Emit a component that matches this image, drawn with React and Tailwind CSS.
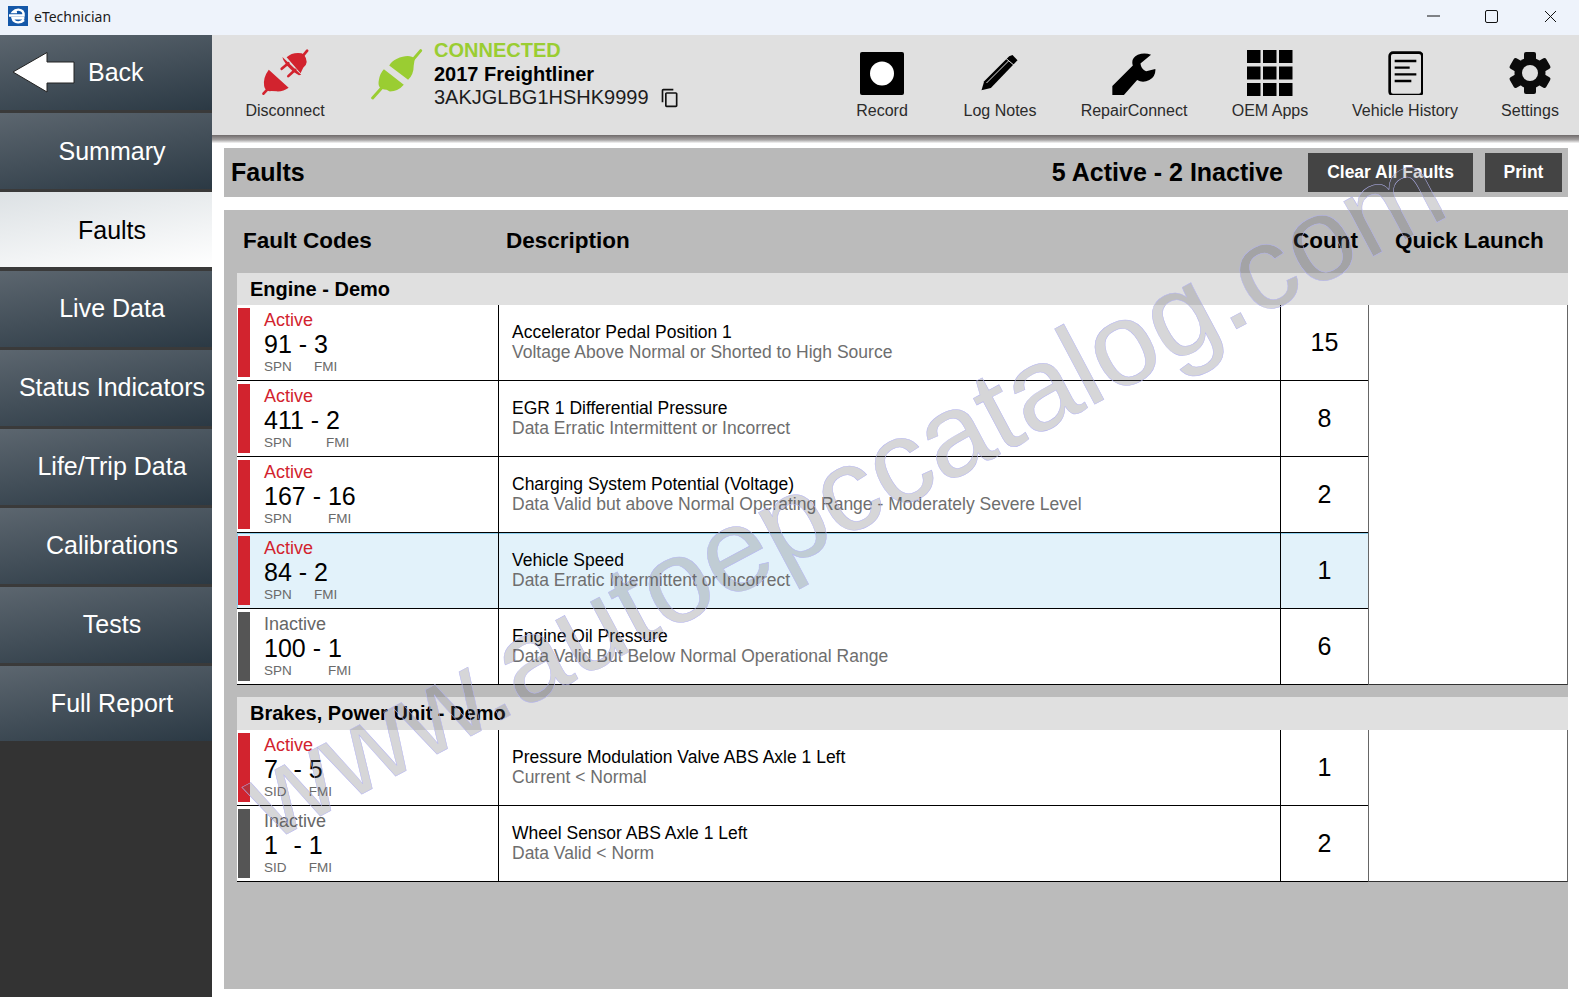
import React from "react";
import { MdOutlineContentCopy } from "react-icons/md";

const NAV = ["Summary", "Faults", "Live Data", "Status Indicators", "Life/Trip Data", "Calibrations", "Tests", "Full Report"];

const ENGINE = [
  { active: true, a: "91", b: "3", l: "SPN", title: "Accelerator Pedal Position 1", sub: "Voltage Above Normal or Shorted to High Source", count: 15 },
  { active: true, a: "411", b: "2", l: "SPN", title: "EGR 1 Differential Pressure", sub: "Data Erratic Intermittent or Incorrect", count: 8 },
  { active: true, a: "167", b: "16", l: "SPN", title: "Charging System Potential (Voltage)", sub: "Data Valid but above Normal Operating Range - Moderately Severe Level", count: 2 },
  { active: true, a: "84", b: "2", l: "SPN", title: "Vehicle Speed", sub: "Data Erratic Intermittent or Incorrect", count: 1, selected: true },
  { active: false, a: "100", b: "1", l: "SPN", title: "Engine Oil Pressure", sub: "Data Valid But Below Normal Operational Range", count: 6 },
];
const BRAKES = [
  { active: true, a: "7", b: "5", l: "SID", title: "Pressure Modulation Valve ABS Axle 1 Left", sub: "Current < Normal", count: 1 },
  { active: false, a: "1", b: "1", l: "SID", title: "Wheel Sensor ABS Axle 1 Left", sub: "Data Valid < Norm", count: 2 },
];

function FaultRow({ r }) {
  return (
    <div className={`flex h-[76px] border-b border-black ${r.selected ? "bg-[#e2f2fa] shadow-[inset_1px_1px_0_#8fd0ee]" : "bg-white"}`}>
      <div className="flex w-[261px] shrink-0">
        <div className={`w-[12px] h-[69px] mt-[3px] ml-[1px] ${r.active ? "bg-[#d2232e]" : "bg-[#555555]"}`} />
        <div className="ml-[14px] pt-[5px]">
          <div className={`text-[18px] leading-[20px] ${r.active ? "text-[#d2232e]" : "text-[#666666]"}`}>{r.active ? "Active" : "Inactive"}</div>
          <div className="grid grid-cols-[auto_auto_auto] w-fit text-[25px] leading-[28px] text-black">
            <span>{r.a}</span>
            <span className="whitespace-pre"> - </span>
            <span>{r.b}</span>
            <span className="text-[13.5px] leading-[18px] text-[#6a6a6a]">{r.l}</span>
            <span />
            <span className="text-[13.5px] leading-[18px] text-[#6a6a6a]">FMI</span>
          </div>
        </div>
      </div>
      <div className="flex-1 border-l border-black pl-[13px] pb-[1px] flex flex-col justify-center">
        <div className="text-[17.5px] leading-[20px] text-black">{r.title}</div>
        <div className="text-[17.5px] leading-[20px] text-[#6e6e6e]">{r.sub}</div>
      </div>
      <div className="w-[88px] border-l border-black flex items-center justify-center text-[25px] text-black">{r.count}</div>
    </div>
  );
}

function Group({ title, rows, tall }) {
  return (
    <div>
      <div className={`${tall ? "h-[33px] pb-[1px]" : "h-[32px]"} bg-[#e0e0e0] pl-[13px] flex items-center text-[20px] font-bold text-black`}>{title}</div>
      <div className="grid grid-cols-[1131px_200px]">
        <div>
          {rows.map((r) => (
            <FaultRow key={r.title} r={r} />
          ))}
        </div>
        <div className="bg-white border-x border-[#666666] border-b border-b-[#333333]" />
      </div>
    </div>
  );
}

function ToolLabel({ children }) {
  return <div className="text-[16px] leading-[20px] text-[#2b2b2b] whitespace-nowrap">{children}</div>;
}

function RedPlug() {
  return (
    <svg width="50" height="48" viewBox="90 40 150 145" fill="#d2232e" stroke="none">
      <path d="M116 106 L176 160 Q160 172 140 171 L124 170 Q105 173 102 155 Q98 130 116 106Z" />
      <path d="M112 165 L100 178" stroke="#d2232e" strokeWidth="8" strokeLinecap="round" />
      <path d="M157 67 L214 121 L207 122 L190 112 L170 92 L160 76Z" />
      <path d="M170 68 Q187 52 215 56 L222 60 Q240 85 220 100 L212 116 Z" />
      <path d="M222 60 L232 48" stroke="#d2232e" strokeWidth="8" strokeLinecap="round" />
      <path d="M175 86 L155 103 M196 106 L175 125" stroke="#d2232e" strokeWidth="8" strokeLinecap="round" />
    </svg>
  );
}

function GreenPlug() {
  return (
    <svg width="53" height="52" viewBox="420 40 160 155" fill="#9acd32">
      <path d="M478 92 L535 135 Q552 120 552 92 L555 72 Q540 55 500 72 Q485 78 478 92Z" />
      <path d="M545 80 L573 47" stroke="#9acd32" strokeWidth="9" strokeLinecap="round" />
      <path d="M462 103 L522 150 Q505 170 480 170 L470 165 Q440 165 447 135 Q450 115 462 103Z" />
      <path d="M455 160 L428 190" stroke="#9acd32" strokeWidth="9" strokeLinecap="round" />
    </svg>
  );
}

function Gear() {
  return (
    <svg width="44" height="44" viewBox="-22 -22 44 44" fill="#0b0b0b">
      <circle r="15.5" />
      {[0, 60, 120, 180, 240, 300].map((d) => (
        <rect key={d} x="-6" y="-21" width="12" height="10" rx="2" transform={`rotate(${d})`} />
      ))}
      <circle r="8" fill="#e0e0e0" />
    </svg>
  );
}

export default function App() {
  return (
    <div className="relative w-[1579px] h-[997px] overflow-hidden flex flex-col bg-white font-['Liberation_Sans',Arial,sans-serif]">
      {/* Title bar */}
      <div className="h-[35px] shrink-0 bg-[#eef3fb] flex items-center pl-[8px] pb-[3px]">
        <svg width="20" height="20" viewBox="0 0 20 20" className="shrink-0">
          <rect width="20" height="20" fill="#1457a8" />
          <path d="M1 9.5 H15.6 Q16 4 10.5 3.6 Q7 3.5 5 6 H9 M16 14 Q13 16.6 10 16.4 Q5.5 16 4.6 12.2 H16.4" fill="none" stroke="#fff" strokeWidth="2.4" />
        </svg>
        <span className="ml-[6px] text-[14px] text-[#1a1a1a] font-['Noto_Sans',sans-serif]">eTechnician</span>
        <div className="ml-auto flex items-center">
          <div className="w-[58px] flex justify-center">
            <svg width="13" height="12" viewBox="0 0 13 12"><path d="M0 6H13" stroke="#111" strokeWidth="1" /></svg>
          </div>
          <div className="w-[58px] flex justify-center">
            <svg width="13" height="13" viewBox="0 0 13 13"><rect x="0.5" y="0.5" width="12" height="12" rx="1.5" fill="none" stroke="#111" /></svg>
          </div>
          <div className="w-[60px] mr-[-1px] flex justify-center">
            <svg width="13" height="13" viewBox="0 0 13 13"><path d="M1 1L12 12M12 1L1 12" stroke="#111" strokeWidth="1" /></svg>
          </div>
        </div>
      </div>

      <div className="flex flex-1 min-h-0">
        {/* Sidebar */}
        <aside className="w-[212px] shrink-0 bg-[#333333] flex flex-col">
          <div className="h-[78px] border-b-[3px] border-[#3a3a3a] bg-[linear-gradient(170deg,#5c666f,#2b3944)] flex items-center pl-[12px] text-[25px] text-white">
            <svg width="64" height="43" viewBox="0 0 64 43" className="shrink-0">
              <path d="M1 21L35 1.5V11H62V32H35V41Z" fill="#fff" stroke="#222" strokeWidth="1" />
            </svg>
            <span className="ml-[12px]">Back</span>
          </div>
          {NAV.map((n) =>
            n === "Faults" ? (
              <div key={n} className="h-[79px] border-b-[4px] border-[#3a3a3a] bg-[linear-gradient(170deg,#dce1e4,#ffffff)] flex items-center justify-center pl-[12px] pt-[3px] text-[25px] text-black">
                {n}
              </div>
            ) : (
              <div key={n} className={`${n === "Full Report" ? "h-[75px]" : "h-[79px] border-b-[3px] border-[#3a3a3a]"} ${n === "Summary" ? "pt-[2px]" : ""} bg-[linear-gradient(170deg,#5c666f,#2b3944)] flex items-center justify-center pl-[12px] text-[25px] text-white whitespace-nowrap`}>
                {n}
              </div>
            )
          )}
        </aside>

        <main className="flex-1 min-w-0 flex flex-col">
          {/* Toolbar */}
          <div className="h-[100px] shrink-0 bg-[#e0e0e0] flex">
            <div className="w-[146px] shrink-0 flex flex-col items-center pt-[13px] ">
              <RedPlug />
              <div className="mt-[5px]"><ToolLabel>Disconnect</ToolLabel></div>
            </div>
            <div className="ml-[12px] pt-[13px]">
              <GreenPlug />
            </div>
            <div className="ml-[11px] pt-[4px]">
              <div className="text-[20px] leading-[22px] font-bold text-[#9acd32]">CONNECTED</div>
              <div className="mt-[1px] text-[20px] leading-[25px] font-bold text-black">2017 Freightliner</div>
              <div className="-mt-[2px] flex items-center text-[20px] leading-[24px] text-[#1c1c1c]">
                3AKJGLBG1HSHK9999
                <MdOutlineContentCopy className="ml-[11px] mt-[2px] text-[#111]" size={20} />
              </div>
            </div>
            <div className="ml-auto flex">
              <div className="w-[100px] flex flex-col items-center pt-[17px]">
                <svg width="44" height="43" viewBox="0 0 44 43"><rect width="44" height="43" rx="2" fill="#000" /><circle cx="22" cy="21.5" r="12" fill="#fff" /></svg>
                <div className="mt-[6px]"><ToolLabel>Record</ToolLabel></div>
              </div>
              <div className="ml-[18px] w-[100px] flex flex-col items-center pt-[18px]">
                <svg width="42" height="40" viewBox="390 40 125 120">
                  <path d="M397 152 L405 125 L480 50 L490 46 L505 62 L425 145 Z" fill="#000" />
                  <path d="M412 130 L478 64 M470 56 L496 78" stroke="#e0e0e0" strokeWidth="3" fill="none" />
                </svg>
                <div className="mt-[8px]"><ToolLabel>Log Notes</ToolLabel></div>
              </div>
              <div className="ml-[10px] w-[148px] flex flex-col items-center pt-[18px]">
                <svg width="47" height="43" viewBox="780 40 140 130">
                  <path d="M783 140 L845 78 Q838 55 860 45 Q880 38 900 45 L868 72 Q870 90 885 95 L913 88 Q915 110 895 122 Q875 132 858 122 L818 167 L783 167 Z" fill="#000" />
                </svg>
                <div className="mt-[5px]"><ToolLabel>RepairConnect</ToolLabel></div>
              </div>
              <div className="ml-[7px] w-[110px] flex flex-col items-center pt-[15px]">
                <svg width="46" height="46" viewBox="0 0 46 46" fill="#000">
                  <rect x="0" y="0" width="13.5" height="13" /><rect x="16" y="0" width="13.5" height="13" /><rect x="32" y="0" width="13.5" height="13" />
                  <rect x="0" y="16.5" width="13.5" height="13" /><rect x="16" y="16.5" width="13.5" height="13" /><rect x="32" y="16.5" width="13.5" height="13" />
                  <rect x="0" y="33" width="13.5" height="13" /><rect x="16" y="33" width="13.5" height="13" /><rect x="32" y="33" width="13.5" height="13" />
                </svg>
                <div className="mt-[5px]"><ToolLabel>OEM Apps</ToolLabel></div>
              </div>
              <div className="ml-[15px] w-[130px] flex flex-col items-center pt-[16px]">
                <svg width="35" height="44" viewBox="470 30 105 132">
                  <rect x="475" y="35" width="98" height="127" rx="10" fill="none" stroke="#000" strokeWidth="8" />
                  <path d="M490 60H555M490 80H535M490 100H555M490 120H540" stroke="#000" strokeWidth="7" />
                </svg>
                <div className="mt-[6px]"><ToolLabel>Vehicle History</ToolLabel></div>
              </div>
              <div className="ml-[20px] mr-[9px] w-[80px] flex flex-col items-center pt-[16px]">
                <Gear />
                <div className="mt-[6px]"><ToolLabel>Settings</ToolLabel></div>
              </div>
            </div>
          </div>
          <div className="h-[8px] shrink-0 bg-[linear-gradient(#6f6a6a,#a5a2a2_60%,#f6f6f6)]" />

          <div className="flex-1 min-h-0 flex flex-col pl-[12px] pr-[11px] pt-[5px] pb-[8px]">
            {/* Heading */}
            <div className="h-[49px] shrink-0 bg-[#b9b9b9] flex items-center pl-[7px] pr-[6px] text-black">
              <div className="text-[25px] font-bold">Faults</div>
              <div className="ml-auto text-[25px] font-bold">5 Active - 2 Inactive</div>
              <button className="ml-[25px] w-[165px] h-[39px] bg-[#444444] text-white text-[17.5px] font-bold">Clear All Faults</button>
              <button className="ml-[12px] w-[77px] h-[39px] bg-[#444444] text-white text-[17.5px] font-bold">Print</button>
            </div>

            {/* Table */}
            <div className="mt-[13px] flex-1 min-h-0 bg-[#bbbbbb] pl-[13px]">
              <div className="h-[63px] flex items-center text-[22.5px] font-bold text-black ml-[-13px] pb-[2px]">
                <div className="w-[282px] pl-[19px]">Fault Codes</div>
                <div className="flex-1">Description</div>
                <div className="w-[102px]">Count</div>
                <div className="w-[173px]">Quick Launch</div>
              </div>
              <Group title="Engine - Demo" rows={ENGINE} />
              <div className="h-[12px]" />
              <Group title="Brakes, Power Unit - Demo" rows={BRAKES} tall />
            </div>
          </div>
        </main>
      </div>

      {/* Watermark */}
      <div className="absolute left-[252px] top-[747px] origin-left rotate-[-28deg] whitespace-nowrap text-[118px] leading-none pointer-events-none text-[#5a5a64]/25 [-webkit-text-stroke:0.5px_#b4b4f0]">
        www.autoepccatalog.com
      </div>
    </div>
  );
}
